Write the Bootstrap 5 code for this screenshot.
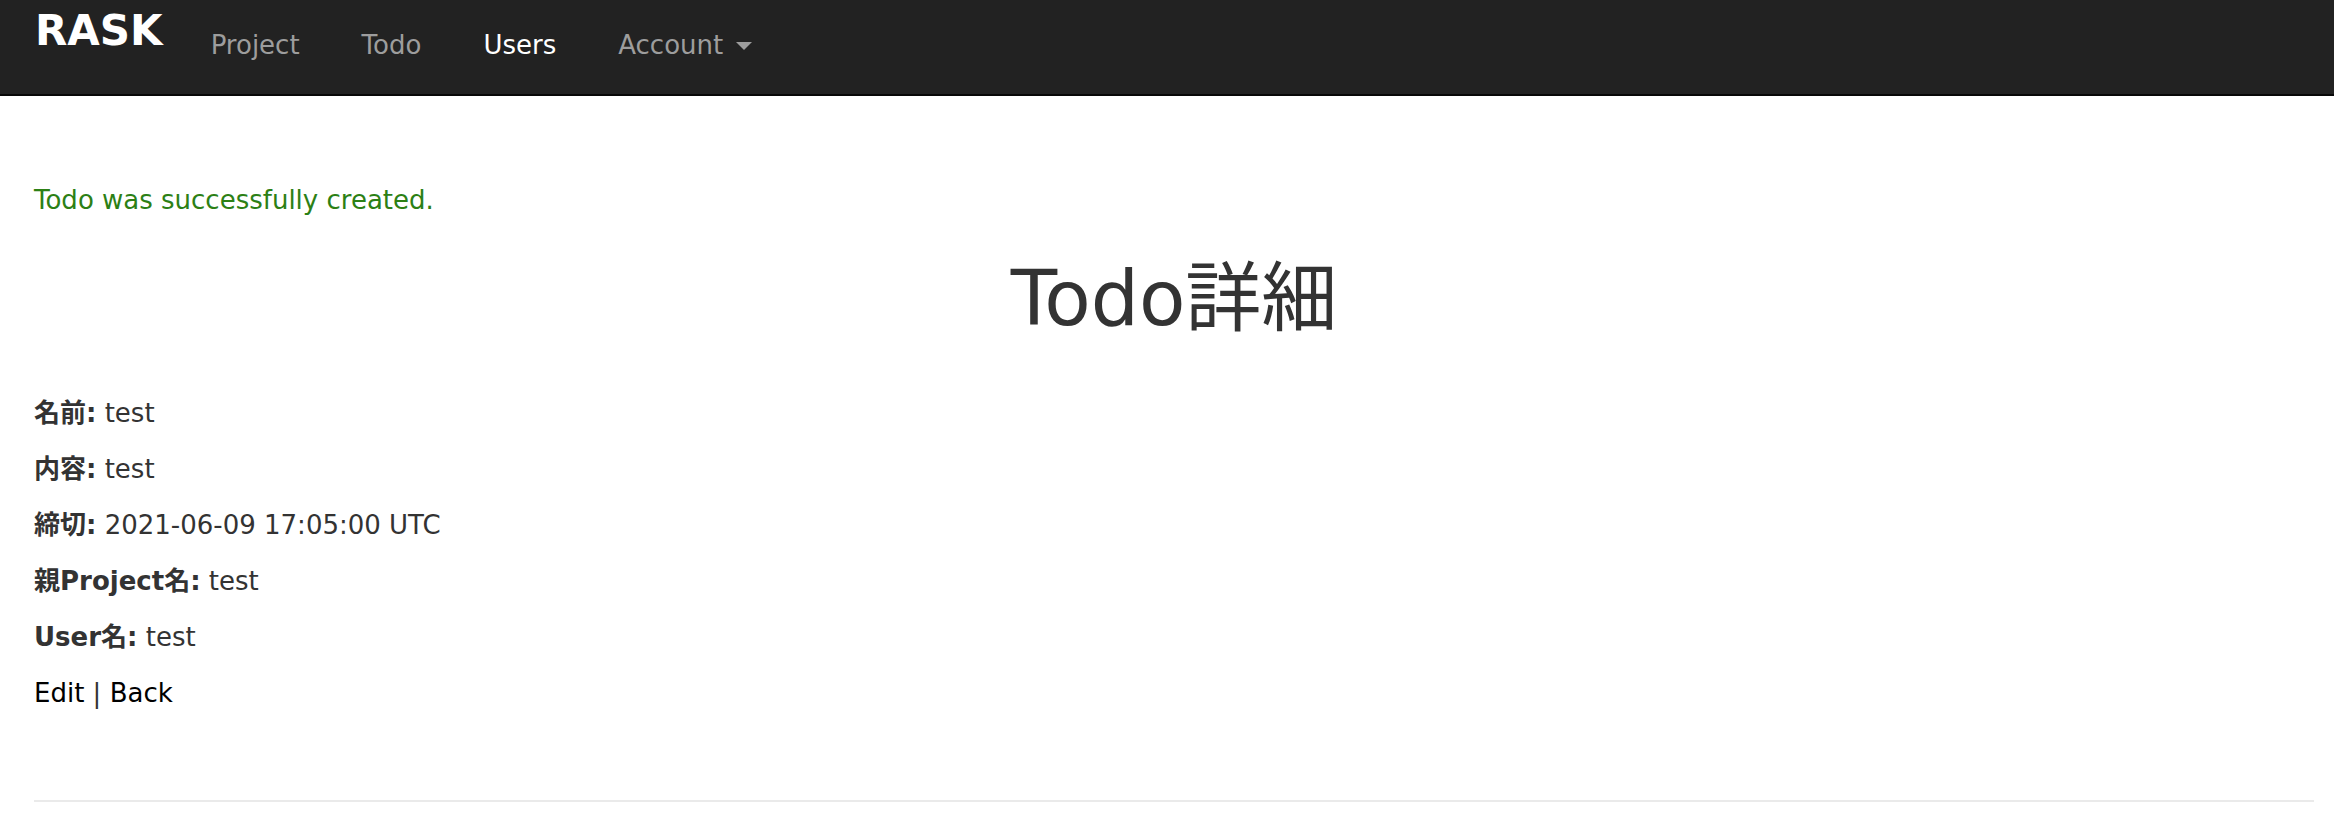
<!DOCTYPE html>
<html lang="ja">
<head>
<meta charset="utf-8">
<meta name="viewport" content="width=device-width, initial-scale=1">
<title>RASK</title>
<link href="https://cdn.jsdelivr.net/npm/bootstrap@5.3.0/dist/css/bootstrap.min.css" rel="stylesheet">
<style>
  body {
    font-family: Verdana, "DejaVu Sans", "Noto Sans CJK JP", sans-serif;
    font-size: 26px;
    line-height: 36px;
    color: #333;
  }
  .site-header {
    --bs-navbar-padding-y: 0;
    --bs-navbar-color: #9d9d9d;
    --bs-navbar-hover-color: #fff;
    --bs-navbar-active-color: #fff;
    --bs-navbar-nav-link-padding-x: 31px;
    --bs-navbar-brand-font-size: 42px;
    min-height: 96px;
    background: #222;
    border-bottom: 2px solid #080808;
  }
  .site-header .navbar-brand { line-height: 62px; padding: 0; margin-right: 17px; }
  .site-header .nav-link { padding-top: 27px; padding-bottom: 31px; }
  .site-header .dropdown-toggle::after { margin-left: 13px; border-width: 8px; border-bottom: 0; vertical-align: 4px; }
  .site-header .dropdown-menu { font-size: 26px; }
  .site-main { padding-left: 34px; padding-right: 20px; padding-top: 86px; }
  .site-header .container-fluid { padding-left: 35px; padding-right: 20px; }
  .notice { color: #2c8015; }
  .page-title { font-size: 76px; line-height: 80px; margin: 41px 0 56px; }
  .site-main p { margin-bottom: 20px; }
  .site-main a { color: #000; }
  .end-rule { margin: 89px 0 0; border-top: 2px solid #eaeaea; opacity: 1; }
</style>
</head>
<body>
<header class="navbar navbar-expand site-header">
  <div class="container-fluid align-items-start">
    <a class="navbar-brand fw-bold text-white" href="#">RASK</a>
    <ul class="navbar-nav me-auto">
      <li class="nav-item"><a class="nav-link" href="#">Project</a></li>
      <li class="nav-item"><a class="nav-link" href="#">Todo</a></li>
      <li class="nav-item"><a class="nav-link active" aria-current="page" href="#">Users</a></li>
      <li class="nav-item dropdown">
        <a class="nav-link dropdown-toggle" href="#" role="button" data-bs-toggle="dropdown" aria-expanded="false">Account</a>
      </li>
    </ul>
  </div>
</header>
<main class="container-fluid site-main">
  <p class="notice">Todo was successfully created.</p>
  <h1 class="page-title text-center fw-normal">Todo詳細</h1>
  <p><strong>名前:</strong> test</p>
  <p><strong>内容:</strong> test</p>
  <p><strong>締切:</strong> 2021-06-09 17:05:00 UTC</p>
  <p><strong>親Project名:</strong> test</p>
  <p><strong>User名:</strong> test</p>
  <p><a class="text-decoration-none" href="#">Edit</a> | <a class="text-decoration-none" href="#">Back</a></p>
  <hr class="end-rule">
</main>
<script src="https://cdn.jsdelivr.net/npm/bootstrap@5.3.0/dist/js/bootstrap.bundle.min.js"></script>
</body>
</html>
